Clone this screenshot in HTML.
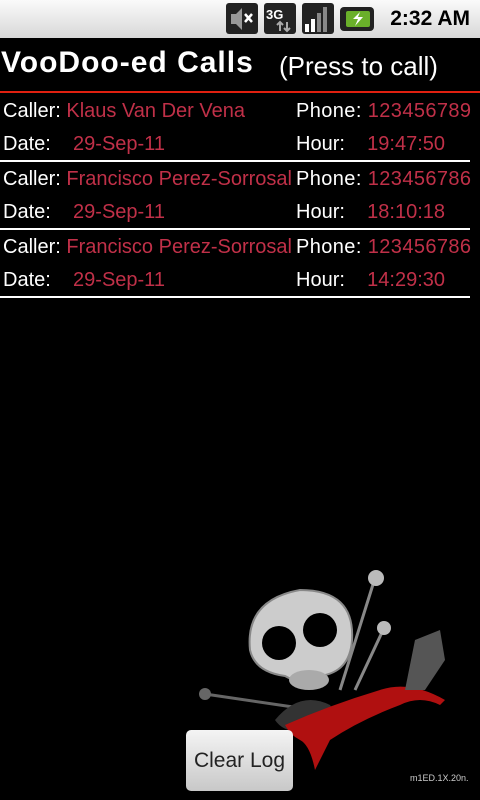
<!DOCTYPE html>
<html><head><meta charset="utf-8"><style>
body{margin:0;width:480px;height:800px;background:#000;overflow:hidden;position:relative;font-family:"Liberation Sans",sans-serif;color:#fff}
.sb{position:absolute;left:0;top:0;width:480px;height:38px;background:linear-gradient(#fafafa,#d8d8d8)}
.time{position:absolute;right:10px;top:7px;font-size:21px;font-weight:bold;color:#000}
.t{position:absolute;top:46px;left:1px;font-size:30px;font-weight:bold;letter-spacing:1px}
.s{position:absolute;top:51px;left:279px;font-size:26px}
.rl{position:absolute;left:0;top:91px;width:480px;height:2px;background:#e02010}
.r{position:absolute;font-size:20px;white-space:nowrap}
.red{color:#c03048}
.ph{letter-spacing:0.4px}
.hl{position:absolute;left:0;width:470px;height:2px;background:#fff}
.btn{position:absolute;left:186px;top:730px;width:107px;height:61px;border-radius:5px;background:linear-gradient(#f4f4f4,#c8c8c8);color:#222;font-size:21px;text-align:center;line-height:61px}
</style></head><body>
<div class="sb">
<svg width="480" height="38" style="position:absolute;left:0;top:0">
<rect x="226" y="3" width="32" height="31" rx="3" fill="#222"/>
<path d="M231 14h5l6-6v22l-6-6h-5z" fill="#999"/><path d="M245 14l7 8M252 14l-7 8" stroke="#fff" stroke-width="2.5"/>
<rect x="264" y="3" width="32" height="31" rx="3" fill="#222"/>
<text x="266" y="19" font-size="13" font-weight="bold" fill="#fff" font-family="Liberation Sans">3G</text>
<path d="M280 22v9M277 25l3-3 3 3M287 22v9M284 28l3 3 3-3" stroke="#aaa" stroke-width="2" fill="none"/>
<rect x="302" y="3" width="32" height="31" rx="3" fill="#222"/>
<rect x="305" y="24" width="4" height="8" fill="#fff"/><rect x="311" y="19" width="4" height="13" fill="#fff"/><rect x="317" y="13" width="4" height="19" fill="#888"/><rect x="323" y="7" width="4" height="25" fill="#888"/>
<rect x="340" y="7" width="34" height="24" rx="4" fill="#222"/><rect x="346" y="11" width="24" height="16" rx="2" fill="#6ab02a"/>
<path d="M360 12l-7 7h5l-3 7 8-9h-5z" fill="#fff"/>
</svg>
<div class="time">2:32 AM</div>
</div>
<div class="t">VooDoo-ed Calls</div>
<div class="s">(Press to call)</div>
<div class="rl"></div>

<div class="r" style="left:3px;top:100px">Caller: <span class="red">Klaus Van Der Vena</span></div>
<div class="r ph" style="left:296px;top:100px">Phone: <span class="red">123456789</span></div>
<div class="r" style="left:3px;top:133px">Date:&nbsp;&nbsp;&nbsp; <span class="red">29-Sep-11</span></div>
<div class="r" style="left:296px;top:133px">Hour:&nbsp;&nbsp;&nbsp; <span class="red">19:47:50</span></div>
<div class="hl" style="top:160px"></div>
<div class="r" style="left:3px;top:168px">Caller: <span class="red">Francisco Perez-Sorrosal</span></div>
<div class="r ph" style="left:296px;top:168px">Phone: <span class="red">123456786</span></div>
<div class="r" style="left:3px;top:201px">Date:&nbsp;&nbsp;&nbsp; <span class="red">29-Sep-11</span></div>
<div class="r" style="left:296px;top:201px">Hour:&nbsp;&nbsp;&nbsp; <span class="red">18:10:18</span></div>
<div class="hl" style="top:228px"></div>
<div class="r" style="left:3px;top:236px">Caller: <span class="red">Francisco Perez-Sorrosal</span></div>
<div class="r ph" style="left:296px;top:236px">Phone: <span class="red">123456786</span></div>
<div class="r" style="left:3px;top:269px">Date:&nbsp;&nbsp;&nbsp; <span class="red">29-Sep-11</span></div>
<div class="r" style="left:296px;top:269px">Hour:&nbsp;&nbsp;&nbsp; <span class="red">14:29:30</span></div>
<div class="hl" style="top:296px"></div>

<svg width="480" height="800" style="position:absolute;left:0;top:0">
<line x1="205" y1="694" x2="300" y2="708" stroke="#666" stroke-width="3"/><circle cx="205" cy="694" r="6" fill="#666"/>
<line x1="375" y1="578" x2="340" y2="690" stroke="#888" stroke-width="3"/><circle cx="376" cy="578" r="8" fill="#bbb"/>
<line x1="384" y1="628" x2="355" y2="690" stroke="#888" stroke-width="3"/><circle cx="384" cy="628" r="7" fill="#bbb"/>
<path d="M250 650 Q245 600 300 590 Q355 590 352 640 Q350 672 320 676 Q300 685 285 676 Q255 672 250 650z" fill="#ccc" stroke="#888" stroke-width="2"/>
<circle cx="279" cy="643" r="17" fill="#000"/><circle cx="320" cy="630" r="17" fill="#000"/>
<ellipse cx="309" cy="680" rx="20" ry="10" fill="#aaa"/>
<path d="M275 720 Q300 690 330 705 Q340 720 310 730 Q285 735 275 720z" fill="#333"/>
<path d="M285 725 Q330 705 380 690 Q410 680 445 700 L440 705 Q420 695 400 705 Q360 720 330 740 Q320 760 315 770 Q310 745 300 740 Q290 735 285 725z" fill="#b01010"/>
<path d="M405 690 L415 640 L440 630 L445 660 L425 690z" fill="#555"/>
<text x="410" y="781" font-size="9" fill="#ccc" font-family="Liberation Sans">m1ED.1X.20n.</text>
</svg>
<div class="btn">Clear Log</div>
</body></html>
